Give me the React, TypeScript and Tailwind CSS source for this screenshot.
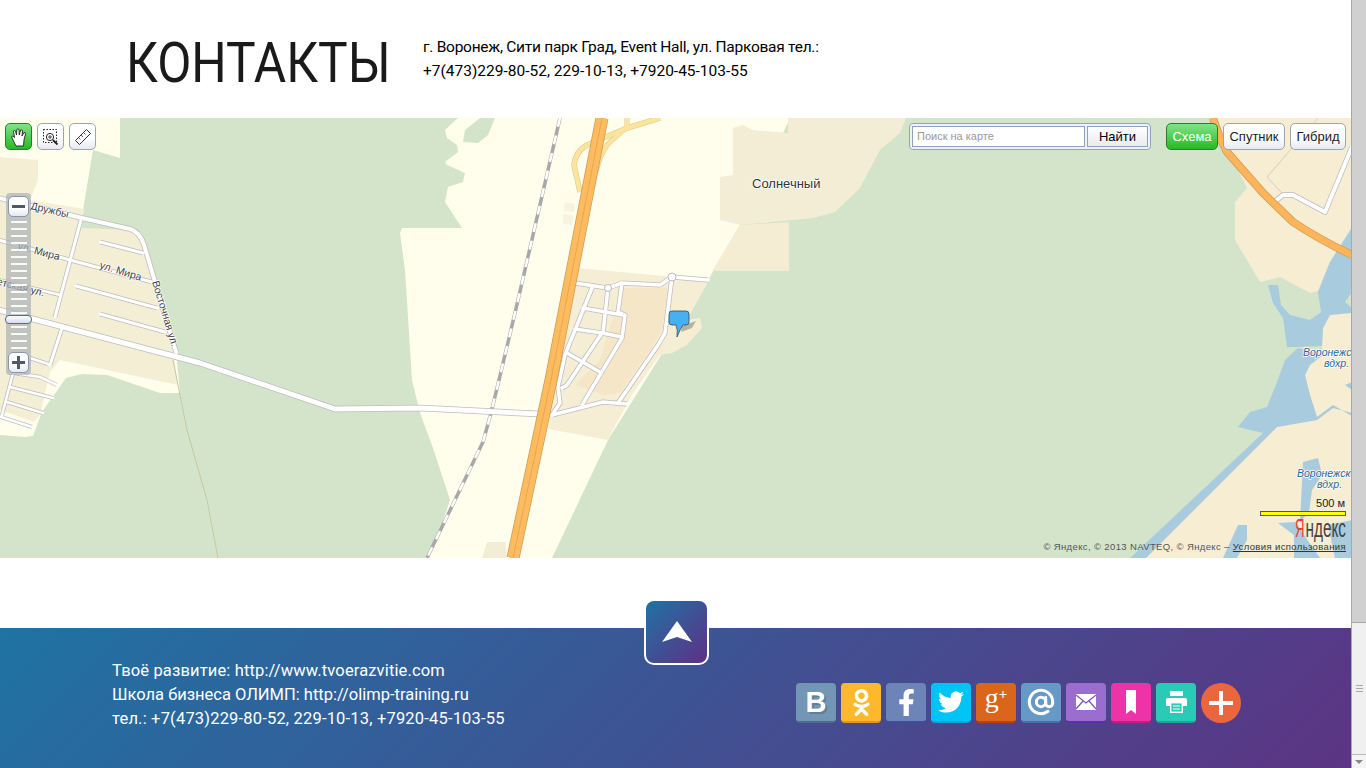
import { AtSign } from "lucide-react";
import { FaFacebookF, FaOdnoklassniki, FaTwitter } from "react-icons/fa";

const roads = [
  { d: "M-5 309 L200 363 L335 409 L420 408 L540 414", w: 5 },
  { d: "M-5 197 L82 218 L130 229 Q140 232 144 245 L176 352", w: 4 },
  { d: "M81 220 L55 317", w: 3 },
  { d: "M62 328 L50 365", w: 3 },
  { d: "M13 373 L2 415", w: 2.5 },
  { d: "M-5 239 L70 260 L152 282", w: 3 },
  { d: "M100 242 L143 253", w: 3 },
  { d: "M76 286 L157 308", w: 3 },
  { d: "M100 314 L165 332", w: 3 },
  { d: "M-5 279 L60 295", w: 2.5 },
  { d: "M30 358 L48 364", w: 2.5 },
  { d: "M13 373 L40 377 L57 385", w: 2.5 },
  { d: "M10 387 L53 398", w: 2.5 },
  { d: "M7 402 L43 413", w: 2.5 },
  { d: "M-2 416 L32 427", w: 2.5 },
  { d: "M575 283 L608 288 L622 283 L660 285 L672 277 L708 280", w: 3.5 },
  { d: "M672 277 L665 333 L658 345 L618 403", w: 3.5 },
  { d: "M552 415 L603 402 L627 404", w: 3.5 },
  { d: "M592 288 L565 355 L558 387 L560 403 L552 415", w: 3.5 },
  { d: "M608 288 L603 333", w: 3.5 },
  { d: "M622 283 L618 312 L625 315 L622 338 L582 405", w: 3.5 },
  { d: "M583 308 L623 315", w: 3.5 },
  { d: "M575 329 L602 333 L622 337", w: 3.5 },
  { d: "M602 333 L567 385 L562 388", w: 3.5 },
  { d: "M567 353 L600 372", w: 3.5 },
  { d: "M1273 203 L1283 195 L1293 195 L1325 212 L1352 147", w: 4 },
];

const water = [
  "1268,285 1278,285 1281,305 1290,315 1310,320 1321,312 1318,292 1330,262 1352,228 1352,292 1345,302 1352,308 1352,313 1330,315 1323,328 1322,346 1298,347 1287,347 1283,318 1273,303",
  "1298,348 1285,360 1277,382 1267,407 1250,412 1238,427 1263,433 1130,558 1146,558 1277,427 1317,420 1333,408 1352,413 1352,416 1333,405 1317,417 1310,395 1305,375 1310,365 1323,355",
  "1345,385 1352,382 1352,390",
  "1303,462 1318,458 1322,475 1312,490 1309,512 1300,522",
  "1223,558 1238,525 1247,525 1247,540 1237,558",
  "1278,523 1296,522 1306,538 1320,558 1294,558 1294,535",
  "1328,525 1352,520 1352,558 1335,558",
];

const socials = [
  { bg: "bg-[#7396b5]", edge: "border-[#4d6b90]", icon: <span className="[font-family:'Liberation_Sans',sans-serif] text-[29px] font-bold leading-none text-white [text-shadow:2px_2px_0_#5e7fa0]">В</span> },
  { bg: "bg-[#fdb92b]", edge: "border-[#e8951f]", icon: <FaOdnoklassniki className="text-[27px] text-white" /> },
  { bg: "bg-[#6c84b8]", edge: "border-[#3d4f9b]", icon: <FaFacebookF className="text-[27px] text-white" /> },
  { bg: "bg-[#00c4f5]", edge: "border-[#00a6e0]", icon: <FaTwitter className="text-[26px] text-white" /> },
  { bg: "bg-[#d9661b]", edge: "border-[#b84210]", icon: <span className="[font-family:'Liberation_Serif',serif] text-[28px] leading-none text-white -mt-2">g<sup className="text-[15px] -top-2 font-bold">+</sup></span> },
  { bg: "bg-[#6699c5]", edge: "border-[#4472a6]", icon: <AtSign size={28} strokeWidth={2.6} className="text-white" /> },
  {
    bg: "bg-[#9a6dcf]",
    edge: "border-[#5a30a8]",
    icon: (
      <svg width="20" height="16" viewBox="0 0 20 16">
        <rect width="20" height="16" fill="#fff" />
        <path d="M0 1 L10 9 L20 1 M0 15 L7 7 M20 15 L13 7" fill="none" stroke="#7a4fc0" strokeWidth="1.2" />
      </svg>
    ),
  },
  {
    bg: "bg-[#ee33a8]",
    edge: "border-[#c81d80]",
    icon: (
      <svg width="10" height="24" viewBox="0 0 10 24">
        <path d="M0 0 H10 V24 L5 20 L0 24 Z" fill="#fff" />
      </svg>
    ),
  },
  {
    bg: "bg-[#2bcab6]",
    edge: "border-[#1ba694]",
    icon: (
      <svg width="21" height="22" viewBox="0 0 21 22">
        <rect x="4" y="0" width="13" height="5" fill="#fff" />
        <path d="M2 7 H19 Q21 7 21 9 V15 H17 V11 H4 V15 H0 V9 Q0 7 2 7 Z" fill="#fff" />
        <rect x="4.7" y="11.7" width="11.6" height="9.6" fill="none" stroke="#fff" strokeWidth="1.4" />
        <path d="M7 15 H14 M7 18 H14" stroke="#fff" strokeWidth="1" />
      </svg>
    ),
  },
];

function MapCanvas() {
  return (
    <svg viewBox="0 118 1351 440" className="block w-full h-[440px]">
      <rect x="0" y="118" width="1351" height="440" fill="#d3e4cb" />

      {/* поля слева */}
      <polygon points="0,118 120,118 120,158 93,150 83,210 0,210" fill="#fffeec" />
      <polygon points="0,340 175,340 180,393 160,393 107,375 82,374 66,378 42,412 33,436 25,437 0,435" fill="#fffeec" />
      <polygon points="0,157 38,160 38,180 30,200 84,209 82,228 135,230 148,255 172,345 178,385 60,360 50,372 40,415 0,372" fill="#f4eed5" />
      <polygon points="0,372 12,385 40,415 34,422 0,410" fill="#f4eed5" />

      {/* центр */}
      <polygon
        points="458,118 445,130 447,138 457,145 458,152 445,162 447,165 465,173 463,182 448,187 445,202 462,228 402,228 400,233 405,270 412,380 420,413 433,448 450,500 440,530 425,558 552,558 608,440 708,280 740,225 790,118"
        fill="#fffeec"
      />
      <polygon points="495,118 480,118 465,130 463,142 478,143 488,135" fill="#d3e4cb" />
      <polygon
        points="733,128 743,125 753,130 788,133 788,118 906,118 900,133 880,150 860,188 835,212 813,218 740,225 720,220 720,177 733,175"
        fill="#f3edd5"
      />
      <polygon points="740,225 789,222 789,271 712,271" fill="#f4ecd3" />
      <polygon
        points="577,268 708,280 713,273 687,320 700,318 702,328 687,345 672,353 660,355 633,393 613,430 608,440 548,429"
        fill="#f6eed4"
      />
      <polygon points="622,288 668,288 662,330 650,350 620,393 605,395 575,385 600,360" fill="#f5e6c8" />
      <polygon points="565,202 575,204 574,212 564,211" fill="#f8f3e0" />
      <polygon points="563,214 573,215 572,225 563,224" fill="#f8f3e0" />
      <polygon points="487,542 505,542 507,558 482,558" fill="#f3edd5" />

      {/* справа */}
      <polygon points="1213,118 1351,118 1351,228 1330,262 1318,291 1310,293 1280,277 1260,282 1235,240 1235,202 1247,188" fill="#f6edd2" />
      <polygon points="1330,315 1352,313 1352,413 1333,408 1317,417 1310,395 1305,375 1310,365 1323,355 1322,346 1323,328" fill="#f6edd2" />
      <polygon points="1277,427 1317,420 1333,408 1352,413 1352,558 1146,558" fill="#f6edd2" />
      {water.map((p, i) => (
        <polygon key={i} points={p} fill="#a9cbde" />
      ))}

      {/* тропа */}
      <path d="M173 360 L187 430 L207 500 L218 558" fill="none" stroke="#c6c9a0" strokeWidth="1" />
      <path d="M1318 118 L1267 177 L1282 193" fill="none" stroke="#d8cfb0" strokeWidth="1" />

      {/* железная дорога */}
      <path d="M560 118 L515 313 L499 380 L491 413 L483 442 L427 558" fill="none" stroke="#a8a8a8" strokeWidth="3.5" />
      <path d="M560 118 L515 313 L499 380 L491 413 L483 442 L427 558" fill="none" stroke="#fff" strokeWidth="2.5" strokeDasharray="9 9" />

      {/* дороги */}
      {roads.map((r, i) => (
        <path key={i} d={r.d} fill="none" stroke="#bcbcc0" strokeWidth={r.w + 1.5} strokeLinejoin="round" />
      ))}
      {roads.map((r, i) => (
        <path key={i} d={r.d} fill="none" stroke="#fff" strokeWidth={r.w} strokeLinejoin="round" strokeLinecap="round" />
      ))}
      <circle cx="608" cy="288" r="3.5" fill="#fff" stroke="#bcbcc0" />
      <circle cx="672" cy="277" r="4" fill="#fff" stroke="#bcbcc0" />

      {/* развязка */}
      <path d="M660 118 L627 128 L587 145 Q575 152 574 165 L580 192" fill="none" stroke="#dcc886" strokeWidth="5.5" />
      <path d="M627 118 L627 127 L607 145 Q600 155 596 172" fill="none" stroke="#dcc886" strokeWidth="5" />
      <path d="M660 118 L627 128 L587 145 Q575 152 574 165 L580 192" fill="none" stroke="#fbe59e" strokeWidth="4.5" />
      <path d="M627 118 L627 127 L607 145 Q600 155 596 172" fill="none" stroke="#fbe59e" strokeWidth="4" />

      {/* трассы */}
      <path d="M602 118 L551 380 L513 558" fill="none" stroke="#c89e5a" strokeWidth="13" />
      <path d="M602 118 L551 380 L513 558" fill="none" stroke="#ffbb5e" strokeWidth="11.5" />
      <path d="M602 118 L551 380 L513 558" fill="none" stroke="#d8a455" strokeWidth="0.8" />
      <path d="M1213 118 Q1218 135 1227 152 L1263 193 L1293 222 Q1320 240 1352 255" fill="none" stroke="#c89e5a" strokeWidth="8" />
      <path d="M1213 118 Q1218 135 1227 152 L1263 193 L1293 222 Q1320 240 1352 255" fill="none" stroke="#ffb45a" strokeWidth="6.5" />

      {/* подписи */}
      <g fontFamily="'Liberation Sans', sans-serif" fill="#444" stroke="#fff" strokeWidth="1.5" paintOrder="stroke" fontSize="10.5">
        <text transform="translate(30 209) rotate(13)">Дружбы</text>
        <text transform="translate(17 249) rotate(15)">ул. Мира</text>
        <text transform="translate(99 268) rotate(17)">ул. Мира</text>
        <text transform="translate(-22 280) rotate(14)">Советская ул.</text>
        <text transform="translate(152 282) rotate(73)">Восточная ул.</text>
      </g>
      <text x="752" y="188" fontFamily="'Liberation Sans', sans-serif" fontSize="13" fill="#333" stroke="#fff" strokeWidth="1.5" paintOrder="stroke">
        Солнечный
      </text>
      <g fontFamily="'Liberation Sans', sans-serif" fontSize="10.5" fontStyle="italic" fill="#1b6a96" stroke="#fff" strokeWidth="1.5" paintOrder="stroke">
        <text x="1303" y="356">Воронежское</text>
        <text x="1324" y="367">вдхр.</text>
        <text x="1297" y="477">Воронежское</text>
        <text x="1317" y="488">вдхр.</text>
      </g>

      {/* метка */}
      <path d="M682 326 L696 321 L692 328 L681 332 Z" fill="#9a9a90" opacity="0.7" />
      <path
        d="M672 311 H686 A3 3 0 0 1 689 314 V322 A3 3 0 0 1 686 325 H683 Q680 329 677 337 Q678 330 676 325 H672 A3 3 0 0 1 669 322 V314 A3 3 0 0 1 672 311 Z"
        fill="#45b0f2"
        stroke="#3a4a55"
        strokeWidth="0.8"
      />

      {/* логотип */}
      <text x="1295" y="537" fontFamily="'Liberation Sans', sans-serif" fontSize="26" fill="#f23b30" textLength="9.5" lengthAdjust="spacingAndGlyphs">
        Я
      </text>
      <text x="1305.5" y="537" fontFamily="'Liberation Sans', sans-serif" fontSize="25" fill="#444" textLength="40.5" lengthAdjust="spacingAndGlyphs">
        ндекс
      </text>
    </svg>
  );
}

function MapButton({ active, className, children }: { active?: boolean; className: string; children: React.ReactNode }) {
  return (
    <div
      className={`flex items-center justify-center h-[27px] rounded-[5px] border [font-family:'Liberation_Sans',sans-serif] text-[13px] ${
        active
          ? "border-[#2d7a36] bg-[linear-gradient(#7fe585,#27b925)] text-white"
          : "border-[#9aa6b2] bg-[linear-gradient(#fff_55%,#e6e9ef)] text-[#1c1c1c]"
      } ${className}`}
    >
      {children}
    </div>
  );
}

function MapControls() {
  return (
    <>
      <div className="absolute left-[5px] top-[5px] flex gap-[5px]">
        <MapButton active className="w-[27px]">
          <svg width="20" height="20" viewBox="0 0 20 20">
            <path
              d="M7 19 L3 11 Q2 9 4 9 L5.5 10.5 L4.5 4 Q5 2.5 6.5 4 L7.5 8 L7.8 2.5 Q9 1 10 2.5 L10.3 8 L11.5 3 Q13 2 13.5 4 L13 9 L15 5.5 Q16.5 5 16.5 7 L15 13 L14.5 19 Z"
              fill="#fff"
              stroke="#222"
              strokeWidth="0.9"
            />
          </svg>
        </MapButton>
        <MapButton className="w-[27px]">
          <svg width="18" height="18" viewBox="0 0 18 18">
            <rect x="1.5" y="1.5" width="13" height="13" fill="none" stroke="#222" strokeDasharray="1.5 1.5" />
            <circle cx="8" cy="9" r="3.6" fill="#fff" stroke="#222" />
            <path d="M6 9 H10 M8 7 V11" stroke="#222" strokeWidth="0.8" />
            <path d="M11 12 L15.5 16.5" stroke="#222" strokeWidth="1.8" />
          </svg>
        </MapButton>
        <MapButton className="w-[27px]">
          <svg width="18" height="18" viewBox="0 0 18 18">
            <path d="M1.5 12.5 L12.5 1.5 L16.5 5.5 L5.5 16.5 Z" fill="#fff" stroke="#333" />
            <path d="M4.5 9.5 L6.5 11.5 M7 7 L9 9 M9.5 4.5 L11.5 6.5" stroke="#333" strokeWidth="0.8" />
          </svg>
        </MapButton>
      </div>

      <div className="absolute left-[6px] top-[75px] flex h-[182px] w-[25px] flex-col items-center rounded-[4px] bg-[#a9b0b3]/70 pt-[3px] pb-[2px]">
        <MapButton className="w-[21px] !h-[21px] shrink-0 !border-[#8497b0]">
          <span className="block h-[3px] w-[13px] bg-[#505a66]" />
        </MapButton>
        <div className="flex flex-1 flex-col items-center justify-center gap-[5px]">
          {Array.from({ length: 19 }).map((_, i) => (
            <span key={i} className="block h-[2px] w-[16px] bg-white/90" />
          ))}
        </div>
        <MapButton className="w-[21px] !h-[21px] shrink-0 !border-[#8497b0]">
          <span className="relative block h-[13px] w-[13px]">
            <span className="absolute left-0 top-[5px] h-[3px] w-[13px] bg-[#505a66]" />
            <span className="absolute left-[5px] top-0 h-[13px] w-[3px] bg-[#505a66]" />
          </span>
        </MapButton>
      </div>
      <div className="absolute left-[5px] top-[197px] h-[9px] w-[27px] rounded-[4px] border border-[#4c6ca8] bg-[linear-gradient(#fff,#d5deeb)]" />

      <div className="absolute left-[909px] top-[5px] flex h-[27px] w-[242px] items-center gap-[2px] rounded-[4px] border border-[#93a3bd] bg-[#eef2f7] px-[2px]">
        <div className="flex h-[21px] w-[173px] items-center border border-[#8fa1bd] bg-white px-[4px] [font-family:'Liberation_Sans',sans-serif] text-[11px] text-[#999]">
          Поиск на карте
        </div>
        <div className="flex h-[21px] w-[61px] items-center justify-center border border-[#8fa1bd] bg-[linear-gradient(#fff,#e8ebf0)] [font-family:'Liberation_Sans',sans-serif] text-[13px] text-black">
          Найти
        </div>
      </div>

      <div className="absolute left-[1166px] top-[5px] flex gap-[5px]">
        <MapButton active className="w-[52px]">Схема</MapButton>
        <MapButton className="w-[62px]">Спутник</MapButton>
        <MapButton className="w-[56px]">Гибрид</MapButton>
      </div>

      <div className="absolute right-[5px] top-[379px] flex w-[86px] flex-col items-end">
        <span className="[font-family:'Liberation_Sans',sans-serif] text-[11px] leading-[13px] text-[#222] pr-[1px]">500 м</span>
        <span className="mt-[1px] block h-[5px] w-[86px] border border-[#555] bg-[#ffff00]" />
      </div>

      <div className="absolute right-[5px] top-[423px] whitespace-nowrap [font-family:'Liberation_Sans',sans-serif] text-[9.5px] leading-[12px] tracking-[0.37px] text-[#555]">
        © Яндекс, © 2013 NAVTEQ, © Яндекс – <span className="text-[#333] underline">Условия использования</span>
      </div>
    </>
  );
}

function Footer() {
  return (
    <footer className="relative flex h-[140px] bg-[linear-gradient(135deg,#1f73a3,#5c3484)] [font-family:Roboto,sans-serif] text-white">
      <div className="pl-[112px] pt-[31px] text-[16.5px] leading-[24px] w-[796px]">
        <p className="tracking-[0.14px]">Твоё развитие: http://www.tvoerazvitie.com</p>
        <p>Школа бизнеса ОЛИМП: http://olimp-training.ru</p>
        <p className="tracking-[0.18px]">тел.: +7(473)229-80-52, 229-10-13, +7920-45-103-55</p>
      </div>
      <div className="flex gap-[5px] pt-[55px]">
        {socials.map((s, i) => (
          <div key={i} className={`flex h-[40px] w-[40px] items-center justify-center overflow-hidden rounded-[4px] border-b-2 ${s.bg} ${s.edge}`}>
            {s.icon}
          </div>
        ))}
        <div className="flex h-[40px] w-[40px] items-center justify-center rounded-full bg-[#e9663f]">
          <svg width="24" height="24" viewBox="0 0 24 24">
            <path d="M12 1 V23 M1 12 H23" stroke="#fff" strokeWidth="4" strokeLinecap="round" />
          </svg>
        </div>
      </div>
      <div className="absolute left-[644px] top-[-29px] flex h-[66px] w-[65px] items-center justify-center rounded-[10px] border-2 border-white bg-[linear-gradient(135deg,#1f73a3,#5f2f85)]">
        <svg width="32" height="24" viewBox="0 0 32 24">
          <path d="M16 1 L31 22 L16 17 L1 22 Z" fill="#fff" />
        </svg>
      </div>
    </footer>
  );
}

function Scrollbar() {
  return (
    <aside className="flex h-[768px] w-[15px] flex-col border-l border-[#a8a8a8] bg-[#d0d0d0]">
      <div className="flex-1" />
      <div className="flex h-[132px] flex-col items-center justify-center gap-[2px] border-t border-[#a8a8a8] bg-[#f0f0f0]">
        <span className="block h-px w-[7px] bg-[#aaa]" />
        <span className="block h-px w-[7px] bg-[#aaa]" />
        <span className="block h-px w-[7px] bg-[#aaa]" />
      </div>
      <div className="flex h-[14px] items-center justify-center border-t border-[#bbb] bg-[#f4f4f4]">
        <span className="block h-0 w-0 border-x-[4px] border-t-[4px] border-x-transparent border-t-[#888]" />
      </div>
    </aside>
  );
}

export default function App() {
  return (
    <div className="flex h-[768px] w-[1366px] overflow-hidden bg-white">
      <main className="w-[1351px]">
        <header className="flex h-[118px] text-black [font-family:Roboto,sans-serif]">
          <div className="pl-[126px] pt-[25px] w-[423px]">
            <h1 className="origin-left scale-x-[0.903] text-[55px] font-normal leading-[76px] whitespace-nowrap text-[#1a1a1a]">КОНТАКТЫ</h1>
          </div>
          <div className="pt-[35px] text-[15.5px] leading-[24px]">
            <p className="tracking-[-0.26px]">г. Воронеж, Сити парк Град, Event Hall, ул. Парковая тел.:</p>
            <p>+7(473)229-80-52, 229-10-13, +7920-45-103-55</p>
          </div>
        </header>
        <section className="relative h-[440px]">
          <MapCanvas />
          <MapControls />
        </section>
        <div className="h-[70px]" />
        <Footer />
      </main>
      <Scrollbar />
    </div>
  );
}
